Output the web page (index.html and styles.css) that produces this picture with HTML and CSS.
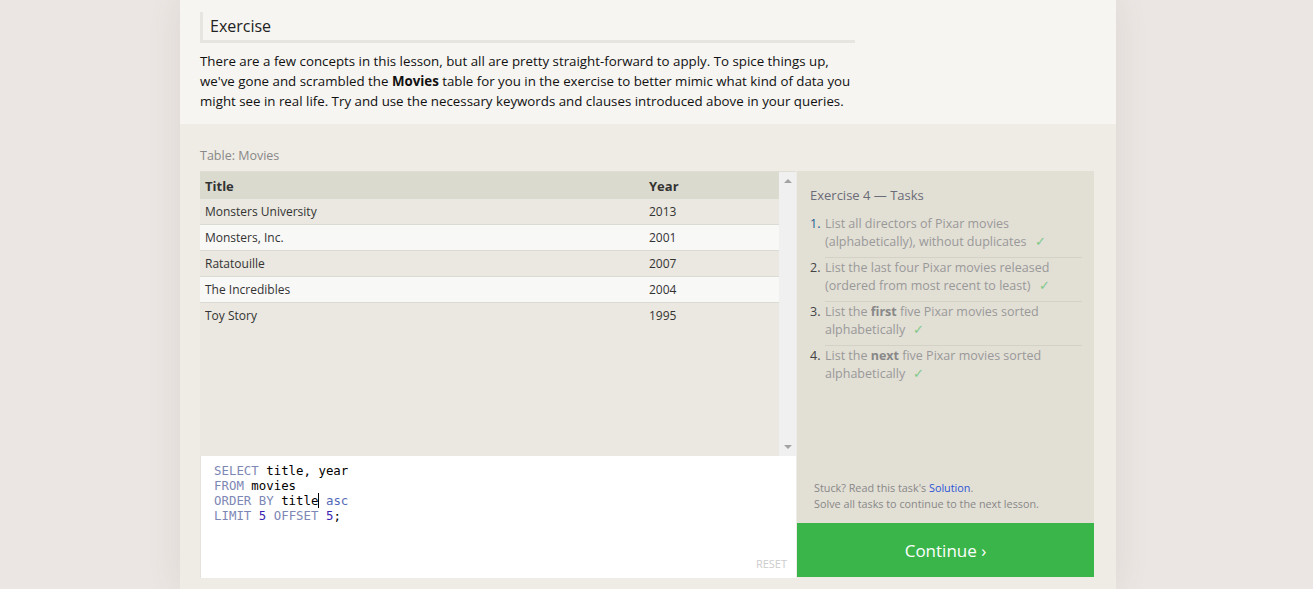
FILE: index.html
```html
<!DOCTYPE html>
<html>
<head>
<meta charset="utf-8">
<link rel="stylesheet" href="styles.css">
</head>
<body>
<div class="page">
  <div class="intro">
    <h2 class="heading">Exercise</h2>
    <p class="desc">There are a few concepts in this lesson, but all are pretty straight-forward to apply. To spice things up, we've gone and scrambled the <b>Movies</b> table for you in the exercise to better mimic what kind of data you might see in real life. Try and use the necessary keywords and clauses introduced above in your queries.</p>
  </div>
  <div class="workspace">
    <div class="caption">Table: Movies</div>
    <div class="panes">
      <div class="left">
        <div class="results">
          <div class="tablewrap">
            <table class="tbl">
              <thead><tr><th class="c1">Title</th><th>Year</th></tr></thead>
              <tbody>
                <tr><td>Monsters University</td><td>2013</td></tr>
                <tr class="alt"><td>Monsters, Inc.</td><td>2001</td></tr>
                <tr><td>Ratatouille</td><td>2007</td></tr>
                <tr class="alt"><td>The Incredibles</td><td>2004</td></tr>
                <tr><td>Toy Story</td><td>1995</td></tr>
              </tbody>
            </table>
          </div>
          <div class="scrollbar"><span class="arrow up"></span><span class="arrow down"></span></div>
        </div>
        <div class="editor">
<pre class="code"><span class="kw">SELECT</span> title, year
<span class="kw">FROM</span> movies
<span class="kw">ORDER BY</span> title<span class="caret"></span> <span class="kw2">asc</span>
<span class="kw">LIMIT</span> <span class="num">5</span> <span class="kw">OFFSET</span> <span class="num">5</span>;</pre>
          <div class="reset">RESET</div>
        </div>
      </div>
      <div class="right">
        <div class="tasks">
          <div class="tasks-title">Exercise 4 — Tasks</div>
          <ol class="list">
            <li><span class="n">1.</span><span class="t">List all directors of Pixar movies (alphabetically), without duplicates <span class="chk">✓</span></span></li>
            <li><span class="n">2.</span><span class="t">List the last four Pixar movies released (ordered from most recent to least) <span class="chk">✓</span></span></li>
            <li><span class="n">3.</span><span class="t">List the <b>first</b> five Pixar movies sorted alphabetically <span class="chk">✓</span></span></li>
            <li><span class="n">4.</span><span class="t">List the <b>next</b> five Pixar movies sorted alphabetically <span class="chk">✓</span></span></li>
          </ol>
          <div class="help">
            <div>Stuck? Read this task's <a class="link">Solution</a>.</div>
            <div>Solve all tasks to continue to the next lesson.</div>
          </div>
        </div>
        <div class="continue">Continue ›</div>
      </div>
    </div>
  </div>
</div>
</body>
</html>
```
FILE: styles.css
```css
html, body { margin: 0; padding: 0; }
body {
  background: #ebe6e3;
  font-family: "Open Sans", "Segoe UI", sans-serif;
  height: 589px;
  overflow: hidden;
}
.page {
  width: 936px;
  margin: 0 0 0 180px;
  background: #f6f5f1;
  box-shadow: 0 0 30px rgba(120,100,90,0.12);
  height: 589px;
}
.intro {
  padding: 12px 20px 0 20px;
  height: 112px;
}
.heading {
  margin: 0;
  width: 645px;
  font-weight: normal;
  font-size: 16px;
  color: #222;
  line-height: 28px;
  padding-left: 7px;
  border-left: 3px solid #e7e5df;
  border-bottom: 3px solid #e7e5df;
  height: 28px;
}
.desc {
  margin: 8px 0 0;
  width: 660px;
  font-size: 13.3px;
  line-height: 20px;
  color: #111;
}
.workspace {
  background: #efece5;
  padding: 23px 20px 0 20px;
  height: 442px;
}
.caption {
  font-size: 12.5px;
  color: #888;
  height: 24px;
  line-height: 18px;
}
.panes { display: flex; gap: 1px; }
.left { width: 596px; display: flex; flex-direction: column; }
.results {
  display: flex;
  height: 284px;
  background: #eae8e0;
  border-top: 1px solid #e0ddd4;
}
.tablewrap { flex: 1; }
.scrollbar {
  width: 17px;
  background: #f0f0f0;
  position: relative;
}
.arrow { position: absolute; left: 5px; width: 0; height: 0; border-left: 4px solid transparent; border-right: 4px solid transparent; }
.arrow.up { top: 7px; border-bottom: 4px solid #a3a3a3; }
.arrow.down { bottom: 7px; border-top: 4px solid #a3a3a3; }
.tbl { width: 100%; border-collapse: collapse; font-size: 12px; color: #333; }
.tbl th {
  background: #dbdacf;
  text-align: left;
  font-size: 13px;
  font-weight: bold;
  height: 27px;
  padding: 0 5px;
  color: #333;
}
.tbl th.c1 { width: 434px; }
.tbl td {
  height: 25px;
  padding: 0 5px;
  border-bottom: 1px solid #dcdbd3;
}
.tbl tr:last-child td { border-bottom: none; }
.tbl tr.alt td { background: #f8f8f7; }
.editor {
  background: #fff;
  height: 122px;
  position: relative;
  border-left: 1px solid #e4e2da;
}
.code {
  margin: 0;
  padding: 7px 13px;
  font-family: "DejaVu Sans Mono", monospace;
  font-size: 12.4px;
  line-height: 15px;
  color: #000;
}
.kw { color: #7d87b4; }
.kw2 { color: #5368b8; }
.num { color: #3a1fb0; }
.caret { display: inline-block; width: 1px; height: 15px; background: #000; vertical-align: -3px; margin-right: -1px; }
.reset {
  position: absolute;
  right: 9px;
  bottom: 7px;
  font-size: 11px;
  color: #ccc;
}
.right { width: 297px; display: flex; flex-direction: column; }
.tasks {
  background: #e2dfd5;
  height: 352px;
  padding: 15px 12px 0 13px;
  box-sizing: border-box;
  display: flex;
  flex-direction: column;
}
.tasks-title { font-size: 13px; color: #6a6c77; line-height: 18px; }
.list { list-style: none; margin: 11px 0 0; padding: 0; font-size: 12.5px; color: #999; line-height: 18px; }
.list li { display: flex; }
.list .n { width: 15px; color: #444; }
.list li:first-child .n { color: #1f5c8f; }
.list .t { flex: 1; padding-bottom: 6px; margin-bottom: 1px; border-bottom: 1px solid #d4d1c6; padding-right: 8px; }
.list li:last-child .t { border-bottom: none; }
.list b { color: #888; }
.chk { color: #7fc98a; margin-left: 5px; }
.help { margin-top: auto; padding-bottom: 11px; font-size: 10.8px; color: #888; line-height: 16px; padding-left: 4px; }
.link { color: #2a55d6; }
.continue {
  background: #3ab54a;
  height: 54px;
  color: #fff;
  font-size: 17px;
  display: flex;
  align-items: center;
  justify-content: center;
}
```
